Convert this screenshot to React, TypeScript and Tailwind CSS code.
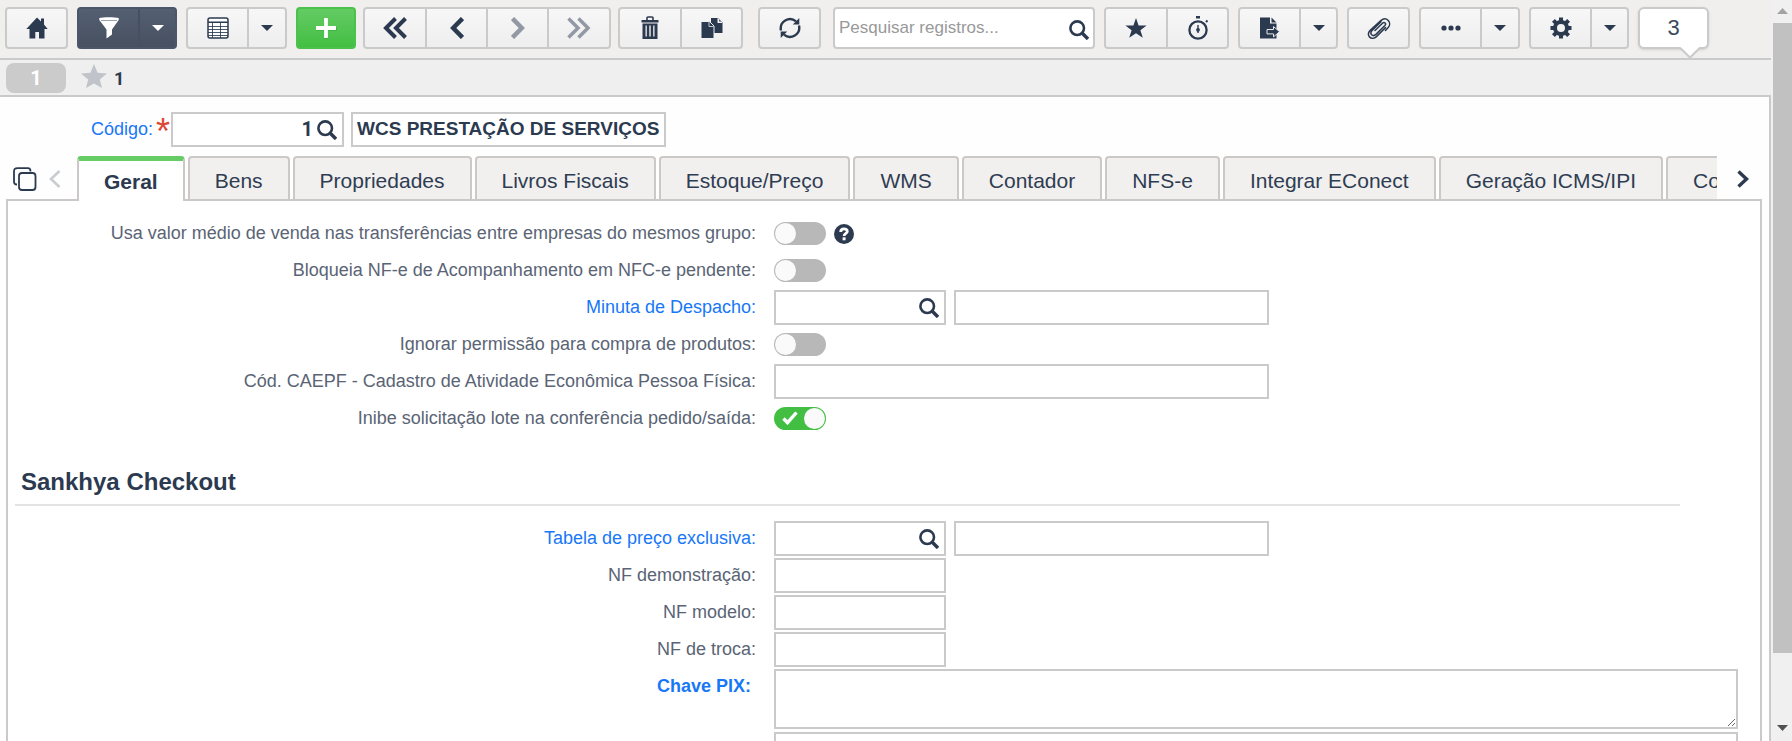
import type { ReactNode } from "react";
import clsx from "clsx";

const INK = "#2c3a50";

type SvgProps = { w: number; h: number; children: ReactNode; className?: string };

function Svg({ w, h, children, className }: SvgProps) {
  return (
    <svg
      width={w}
      height={h}
      viewBox={`0 0 ${w} ${h}`}
      fill="none"
      aria-hidden="true"
      className={clsx("shrink-0", className)}
    >
      {children}
    </svg>
  );
}

const HomeIcon = () => (
  <Svg w={22} h={22}>
    <path
      fill={INK}
      d="M11 .5 15 4.500V1.500h3V7.500l3.700 4.500H18.500V21.500H13V15H9.300v6.500H3.500V12H.3z"
    />
  </Svg>
);

const FunnelIcon = () => (
  <Svg w={20} h={22}>
    <path fill="#fff" d="M.3 1C4 0 16 0 19.700 1v2L13 12.500V17.500L7.500 21.500V12.500L.3 3z" />
    <path stroke="#9aa2ae" d="M2 3.500h16" />
  </Svg>
);

const Caret = ({ color = INK }: { color?: string }) => (
  <Svg w={12} h={6}>
    <path fill={color} d="M0 0h12L6 6z" />
  </Svg>
);

const TableIcon = () => (
  <Svg w={22} h={22}>
    <rect x="1" y="1" width="20" height="20" rx="2" fill="#fff" stroke={INK} strokeWidth="1.500" />
    <path stroke={INK} strokeWidth="1.500" d="M1 5.200h20" />
    <path stroke={INK} d="M1 9.500h20M1 12.500h20M1 15.500h20M1 18.500h20M5.500 5.500V21M13.500 5.500V21" strokeOpacity=".85" />
  </Svg>
);

const PlusIcon = () => (
  <Svg w={22} h={22}>
    <path stroke="#2f9a31" strokeOpacity=".5" strokeWidth="3.500" d="M11 2v20M1 12h21" />
    <path stroke="#fff" strokeWidth="3.800" d="M11 1v20M1 11h20" />
  </Svg>
);

const DoubleLeft = () => (
  <Svg w={24} h={22}>
    <path stroke={INK} strokeWidth="4" d="M12.500 1.500 3 11l9.500 9.500M22.500 1.500 13 11l9.500 9.500" />
  </Svg>
);

const SingleLeft = () => (
  <Svg w={14} h={22}>
    <path stroke={INK} strokeWidth="4.500" d="M12.500 1.500 3.200 11l9.300 9.500" />
  </Svg>
);

const SingleRight = () => (
  <Svg w={14} h={22}>
    <path stroke="#9299a5" strokeWidth="4.500" d="M1.500 1.500 10.800 11l-9.300 9.500" />
  </Svg>
);

const DoubleRight = () => (
  <Svg w={24} h={22}>
    <path stroke="#9299a5" strokeWidth="3.500" d="M1.500 1.500 11 11l-9.500 9.500M11.500 1.500 21 11l-9.500 9.500" />
  </Svg>
);

const TrashIcon = () => (
  <Svg w={18} h={24}>
    <path stroke={INK} strokeWidth="1.600" d="M6 4V1.800Q6 1 7 1h4q1 0 1 .8V4" />
    <path fill={INK} d="M.5 4h17v2.600H.5z" />
    <path fill={INK} fillRule="evenodd" d="M1.500 7.500h15V23h-15zM4.500 9.500v11h1.300v-11zm3.800 0v11h1.400v-11zm3.900 0v11h1.300v-11z" />
  </Svg>
);

const CopyIcon = () => (
  <Svg w={22} h={22}>
    <path fill={INK} d="M10 1h7l4.500 4.500V16H10z" />
    <path fill="#f3f3f3" d="M16.500 1v5h5L20.500 4.500h-2.300V2.300z" />
    <path fill={INK} stroke="#f3f3f3" d="M0 4.500h8.500l4.500 4.500v12.500H0z" />
    <path stroke="#c3c7cd" d="M8 5v4.500h4.500" />
  </Svg>
);

const RefreshIcon = () => (
  <Svg w={22} h={22}>
    <path stroke={INK} strokeWidth="2.400" d="M2 13.500A9.300 9.300 0 0 1 17 4.300M20 8.500A9.300 9.300 0 0 1 5 17.700" />
    <path fill={INK} d="M20.300 1v6.500h-6.500zM1.700 21v-6.500h6.500z" />
  </Svg>
);

const SearchIcon = ({ className }: { className?: string }) => (
  <Svg w={20} h={20} className={className}>
    <circle cx="8.200" cy="8.200" r="6.800" stroke={INK} strokeWidth="2.600" />
    <path stroke={INK} strokeWidth="3.400" d="m12.800 12.800 6.200 6.200" />
  </Svg>
);

const StarIcon = () => (
  <Svg w={22} h={20}>
    <path fill={INK} d="m11 0 2.600 7.400 8 .1-6.200 4.700 2.400 7.600L11 15.200 4.200 19.800l2.400-7.600L.4 7.500l8-.1z" />
  </Svg>
);

const StopwatchIcon = () => (
  <Svg w={22} h={24}>
    <circle cx="11" cy="14" r="8.600" stroke={INK} strokeWidth="2.300" />
    <path fill={INK} d="M9 0h4v2.500H9zM18.200 5.200l1.700-1.500 1.300 1.500-1.500 1.500z" />
    <path stroke={INK} strokeWidth="1.400" d="M11 9v8" />
    <circle cx="11" cy="13.800" r="1.900" fill={INK} />
  </Svg>
);

const ExportIcon = () => (
  <Svg w={20} h={22}>
    <path fill={INK} d="M0 .5h10v6h6.500v15H0z" />
    <path fill={INK} d="M11.500.5 16.500 5.500h-5z" />
    <path
      fill={INK}
      stroke="#e8e9eb"
      d="M7 12.500h6.500V9.500l6 5.200-6 5.200v-3H7z"
    />
  </Svg>
);

const ClipIcon = () => (
  <Svg w={24} h={22}>
    <path
      stroke={INK}
      strokeWidth="1.500"
      strokeLinecap="round"
      d="m8 13.500 7.500-7.300c1.900-1.800 4.200.4 2.400 2.300l-9 8.900c-3.200 3-6.800-.7-3.800-3.800L14 4.800M18.500 13.500l2.700-2.900c4.200-4.500-1.600-12-7.400-7L3.200 13.400c-5 5 1.500 10.800 6.200 6.200l9.100-9"
    />
  </Svg>
);

const DotsIcon = () => (
  <Svg w={20} h={6}>
    <circle cx="3" cy="3" r="2.600" fill={INK} />
    <circle cx="10" cy="3" r="2.600" fill={INK} />
    <circle cx="17" cy="3" r="2.600" fill={INK} />
  </Svg>
);

const GearIcon = () => (
  <Svg w={22} h={22}>
    <circle cx="11" cy="11" r="6" stroke={INK} strokeWidth="4" />
    <path
      stroke={INK}
      strokeWidth="4"
      d="M11 .5v4M11 17.500v4M.5 11h4M17.500 11h4M3.400 3.400l2.900 2.900M15.700 15.700l2.900 2.900M3.400 18.600l2.900-2.900M15.700 6.300l2.900-2.900"
    />
  </Svg>
);

const WindowsIcon = () => (
  <Svg w={24} h={24}>
    <rect x="6" y="6" width="16.500" height="17" rx="3" stroke={INK} strokeWidth="1.800" />
    <path stroke={INK} strokeWidth="1.800" d="M17.500 4.500C17.500 2 16.500 1.200 15 1.200H4.500C2 1.200 1 2 1 4.500v10.200c0 1.500 1 2.800 3 2.800" />
  </Svg>
);

type ToolButtonProps = {
  label: string;
  tone?: "light" | "dark";
  first?: boolean;
  width: string;
  children: ReactNode;
};

function ToolButton({ label, tone = "light", first, width, children }: ToolButtonProps) {
  return (
    <button
      type="button"
      aria-label={label}
      className={clsx(
        "flex h-full items-center justify-center",
        width,
        !first && "border-l-2",
        tone === "light" ? "border-[#cacaca]" : "border-[#465061]",
      )}
    >
      {children}
    </button>
  );
}

function Group({ children, tone = "light" }: { children: ReactNode; tone?: "light" | "dark" | "green" }) {
  return (
    <div
      className={clsx(
        "flex h-[42px] shrink-0 overflow-hidden rounded border-2 bg-linear-to-b",
        tone === "light" && "border-[#cacaca] from-[#f7f7f7] to-[#eeeeee]",
        tone === "dark" && "border-[#4b5668] from-[#545f71] to-[#465061]",
        tone === "green" && "border-[#4cc24c] from-[#63cb63] to-[#42bf42]",
      )}
    >
      {children}
    </div>
  );
}

function Toolbar() {
  return (
    <header className="flex h-[60px] shrink-0 items-start border-b-2 border-[#cacaca] bg-[#f0efed] pt-[7px] pl-[5px]">
      <div className="flex gap-[9px]">
        <Group>
          <ToolButton label="Início" first width="w-[59px]"><HomeIcon /></ToolButton>
        </Group>
        <Group tone="dark">
          <ToolButton label="Filtro" first tone="dark" width="w-[59px]"><FunnelIcon /></ToolButton>
          <ToolButton label="Opções de filtro" tone="dark" width="w-[37px]"><Caret color="#fff" /></ToolButton>
        </Group>
        <Group>
          <ToolButton label="Modo grade" first width="w-[59px]"><TableIcon /></ToolButton>
          <ToolButton label="Opções de grade" width="w-[38px]"><Caret /></ToolButton>
        </Group>
        <Group tone="green">
          <ToolButton label="Adicionar" first width="w-[56px]"><PlusIcon /></ToolButton>
        </Group>
      </div>
      <div className="ml-[7px] flex gap-[7px]">
        <Group>
          <ToolButton label="Primeiro" first width="w-[60px]"><DoubleLeft /></ToolButton>
          <ToolButton label="Anterior" width="w-[61px]"><SingleLeft /></ToolButton>
          <ToolButton label="Próximo" width="w-[61px]"><SingleRight /></ToolButton>
          <ToolButton label="Último" width="w-[62px]"><DoubleRight /></ToolButton>
        </Group>
        <Group>
          <ToolButton label="Excluir" first width="w-[60px]"><TrashIcon /></ToolButton>
          <ToolButton label="Duplicar" width="w-[61px]"><CopyIcon /></ToolButton>
        </Group>
      </div>
      <div className="ml-[15px]">
        <Group>
          <ToolButton label="Atualizar" first width="w-[59px]"><RefreshIcon /></ToolButton>
        </Group>
      </div>
      <form className="ml-3 flex h-[42px] w-[262px] shrink-0 items-center rounded border-2 border-[#cacaca] bg-white pr-1 pl-1">
        <input
          aria-label="Pesquisar registros"
          placeholder="Pesquisar registros..."
          className="min-w-0 flex-1 text-[17px] text-[#2c3a50] outline-none placeholder:text-[#999999]"
        />
        <button type="button" aria-label="Pesquisar"><SearchIcon className="mt-1" /></button>
      </form>
      <div className="ml-[9px] flex gap-[9px]">
        <Group>
          <ToolButton label="Favoritos" first width="w-[60px]"><StarIcon /></ToolButton>
          <ToolButton label="Histórico" width="w-[61px]"><StopwatchIcon /></ToolButton>
        </Group>
        <Group>
          <ToolButton label="Exportar" first width="w-[59px]"><ExportIcon /></ToolButton>
          <ToolButton label="Opções de exportação" width="w-[37px]"><Caret /></ToolButton>
        </Group>
        <Group>
          <ToolButton label="Anexos" first width="w-[59px]"><ClipIcon /></ToolButton>
        </Group>
        <Group>
          <ToolButton label="Mais ações" first width="w-[59px]"><DotsIcon /></ToolButton>
          <ToolButton label="Lista de ações" width="w-[38px]"><Caret /></ToolButton>
        </Group>
        <Group>
          <ToolButton label="Configurações" first width="w-[59px]"><GearIcon /></ToolButton>
          <ToolButton label="Opções de configuração" width="w-[37px]"><Caret /></ToolButton>
        </Group>
        <div className="relative flex h-[42px] w-[71px] items-center justify-center rounded-md border-2 border-[#cacaca] bg-white text-[22px] text-[#3c495d] shadow-sm">
          <span className="pb-0.5">3</span>
          <Svg w={22} h={12} className="absolute top-[38px] right-[6px]">
            <path fill="#fff" d="M1 0h20L11 10.500z" />
            <path stroke="#cacaca" strokeWidth="2" d="M1 .8 11 10.500 21 .8" />
          </Svg>
        </div>
      </div>
    </header>
  );
}

function RecordBar() {
  return (
    <div className="flex h-[37px] shrink-0 items-center border-b-2 border-[#cacaca] bg-[#efefef] pl-1.5">
      <span className="flex h-[30px] w-[60px] items-center justify-center rounded-lg bg-[#cbcbcb] font-['Roboto',sans-serif] text-[20px] font-bold text-white">
        1
      </span>
      <Svg w={26} h={24} className="mb-1 ml-[15px]">
        <path fill="#c0c4ca" d="m13 0 3.600 8.700 9.400.7-7.200 6.100 2.200 8.500-8-4.600L5 24l2.200-8.500L0 9.400l9.400-.7z" />
      </Svg>
      <span className="ml-[7px] pt-0.5 font-['Roboto',sans-serif] text-[18px] font-bold text-[#2c3a50]">1</span>
    </div>
  );
}

const box = "h-[35px] border-2 border-[#cacaca] bg-white text-[#2c3a50] outline-none";

function CodeRow() {
  return (
    <div className="flex shrink-0 items-center pt-[15px] pl-[91px]">
      <label htmlFor="codigo" className="text-[18px] text-[#1877f7]">Código:</label>
      <span className="ml-[3px] h-8 w-[15px] text-left text-[36px] leading-9 text-[#dc4733]">*</span>
      <div className={clsx(box, "flex w-[173px] items-center pr-[5px]")}>
        <input
          id="codigo"
          defaultValue="1"
          className="min-w-0 flex-1 pr-1 pb-0.5 text-right font-['Roboto',sans-serif] text-[20px] font-bold outline-none"
        />
        <button type="button" aria-label="Buscar código"><SearchIcon /></button>
      </div>
      <input
        aria-label="Nome da empresa"
        defaultValue="WCS PRESTAÇÃO DE SERVIÇOS"
        className={clsx(box, "ml-[7px] w-[315px] px-1 pb-0.5 text-[19px] font-bold")}
      />
    </div>
  );
}

const tabs = [
  "Geral",
  "Bens",
  "Propriedades",
  "Livros Fiscais",
  "Estoque/Preço",
  "WMS",
  "Contador",
  "NFS-e",
  "Integrar EConect",
  "Geração ICMS/IPI",
  "Contabilidade",
];

function Tabs() {
  return (
    <div className="relative z-10 -mb-0.5 flex h-[45px] shrink-0">
      <button type="button" aria-label="Listar abas" className="ml-[13px] flex h-[45px] items-center">
        <WindowsIcon />
      </button>
      <button type="button" aria-label="Aba anterior" className="mr-4 ml-3 flex h-[45px] items-center">
        <Svg w={12} h={18}><path stroke="#c9ccd1" strokeWidth="2.600" d="M10.500 1 2 9l8.500 8" /></Svg>
      </button>
      <div role="tablist" className="flex min-w-0 flex-1 items-start gap-[3px] overflow-hidden">
        {tabs.map((tab, i) => (
          <button
            key={tab}
            type="button"
            role="tab"
            aria-selected={i === 0}
            className={clsx(
              "shrink-0 rounded-t border-x-2 border-[#cdc8c8] px-[25px] text-[21px] whitespace-nowrap",
              i === 0
                ? "h-[45px] border-t-[5px] border-t-[#66cc66] bg-white pt-px font-bold text-[#2c3a50]"
                : "h-[43px] border-t-2 bg-[#f1f0ee] pt-[5px] text-[#2f3d53]",
            )}
          >
            {tab}
          </button>
        ))}
      </div>
      <button type="button" aria-label="Próxima aba" className="mr-5 ml-5 flex h-[45px] items-center">
        <Svg w={12} h={18}><path stroke={INK} strokeWidth="3.400" d="M1.500 1.500 9.500 9l-8 7.500" /></Svg>
      </button>
    </div>
  );
}

type RowProps = { id: string; label: string; link?: boolean; bold?: boolean; children: ReactNode };

function Row({ id, label, link, bold, children }: RowProps) {
  return (
    <div className="flex min-h-[37px] items-start">
      <label
        htmlFor={id}
        className={clsx(
          "w-[748px] shrink-0 text-right text-[18px] leading-[35px]",
          link ? "text-[#1877f7]" : "text-[#5a6475]",
          bold && "pr-[5px] font-bold",
        )}
      >
        {label}
      </label>
      <div className="ml-[18px] flex min-w-0 flex-1 items-start gap-2">{children}</div>
    </div>
  );
}

function Toggle({ id, on = false }: { id: string; on?: boolean }) {
  return (
    <span className="relative mt-1.5 flex h-[23px] w-[52px]">
      <input
        id={id}
        type="checkbox"
        role="switch"
        defaultChecked={on}
        className="peer h-[23px] w-[52px] appearance-none rounded-full bg-[#b8b8b8] checked:bg-[#42bf42]"
      />
      <span className="pointer-events-none absolute top-px left-px size-[21px] rounded-full bg-[#fafafa] peer-checked:left-[30px]" />
      <Svg w={16} h={14} className="pointer-events-none absolute top-1 left-2 hidden peer-checked:block">
        <path stroke="#fff" strokeWidth="3.400" d="m1.500 7.500 4 4.200L14.500 1.500" />
      </Svg>
    </span>
  );
}

function LookupField({ id }: { id: string }) {
  return (
    <>
      <div className={clsx(box, "flex w-[172px] items-center pr-[5px]")}>
        <input id={id} className="min-w-0 flex-1 px-1 text-[18px] outline-none" />
        <button type="button" aria-label="Buscar"><SearchIcon /></button>
      </div>
      <input aria-label="Descrição" className={clsx(box, "w-[315px] px-1 text-[18px]")} />
    </>
  );
}

function Panel() {
  return (
    <section className="mr-[7px] ml-1.5 flex-1 border-2 border-b-0 border-[#cacaca] border-t-[#cdc8c8] bg-white pt-[15px]">
      <Row id="valor-medio" label="Usa valor médio de venda nas transferências entre empresas do mesmos grupo:">
        <Toggle id="valor-medio" />
        <button type="button" aria-label="Ajuda" className="mt-2">
          <Svg w={20} h={20}>
            <circle cx="10" cy="10" r="10" fill={INK} />
            <path stroke="#fff" strokeWidth="2.800" d="M6.700 8C6.700 4 13.300 4 13.300 7.400c0 2-3.200 2-3.200 4.600" />
            <path fill="#fff" d="M8.600 13.300h3v3h-3z" />
          </Svg>
        </button>
      </Row>
      <Row id="bloqueia" label="Bloqueia NF-e de Acompanhamento em NFC-e pendente:">
        <Toggle id="bloqueia" />
      </Row>
      <Row id="minuta" label="Minuta de Despacho:" link>
        <LookupField id="minuta" />
      </Row>
      <Row id="ignorar" label="Ignorar permissão para compra de produtos:">
        <Toggle id="ignorar" />
      </Row>
      <Row id="caepf" label="Cód. CAEPF - Cadastro de Atividade Econômica Pessoa Física:">
        <input id="caepf" className={clsx(box, "w-[495px] px-1 text-[18px]")} />
      </Row>
      <Row id="inibe" label="Inibe solicitação lote na conferência pedido/saída:">
        <Toggle id="inibe" on />
      </Row>
      <h2 className="mt-7 mr-20 mb-[15px] ml-[7px] h-10 border-b-2 border-[#e3e3e3] pl-1.5 text-[24px] leading-8 font-bold text-[#2c3a50]">
        Sankhya Checkout
      </h2>
      <Row id="tabela" label="Tabela de preço exclusiva:" link>
        <LookupField id="tabela" />
      </Row>
      <Row id="demonstracao" label="NF demonstração:">
        <input id="demonstracao" className={clsx(box, "w-[172px] px-1 text-[18px]")} />
      </Row>
      <Row id="modelo" label="NF modelo:">
        <input id="modelo" className={clsx(box, "w-[172px] px-1 text-[18px]")} />
      </Row>
      <Row id="troca" label="NF de troca:">
        <input id="troca" className={clsx(box, "w-[172px] px-1 text-[18px]")} />
      </Row>
      <Row id="pix" label="Chave PIX:" link bold>
        <div className="mr-[22px] flex flex-1 flex-col gap-[3px]">
          <textarea
            id="pix"
            className="h-[60px] w-full resize border-2 border-[#cacaca] bg-white px-1 text-[18px] outline-none"
          />
          <input aria-label="Complemento" className={box} />
        </div>
      </Row>
    </section>
  );
}

function ScrollRail() {
  return (
    <div className="flex w-[21px] shrink-0 flex-col bg-[#f0f0f0] pl-0.5" aria-hidden="true">
      <div className="flex h-[23px] items-center justify-center">
        <Svg w={11} h={6} className="mb-0.5"><path fill="#a3a3a3" d="M0 6h11L5.500 0z" /></Svg>
      </div>
      <div className="h-[85%] bg-[#c1c1c1]" />
      <div className="flex-1" />
      <div className="flex h-[23px] items-center justify-center">
        <Svg w={11} h={6} className="mb-1"><path fill="#505050" d="M0 0h11L5.500 6z" /></Svg>
      </div>
    </div>
  );
}

export default function App() {
  return (
    <div className="flex h-screen overflow-hidden bg-white font-['Liberation_Sans',Arial,sans-serif]">
      <main className="flex min-w-0 flex-1 flex-col overflow-hidden">
        <Toolbar />
        <RecordBar />
        <div className="flex flex-1 flex-col border-r-2 border-[#cacaca] bg-[#fefefe]">
          <CodeRow />
          <div className="h-[9px] shrink-0" />
          <Tabs />
          <Panel />
        </div>
      </main>
      <ScrollRail />
    </div>
  );
}
